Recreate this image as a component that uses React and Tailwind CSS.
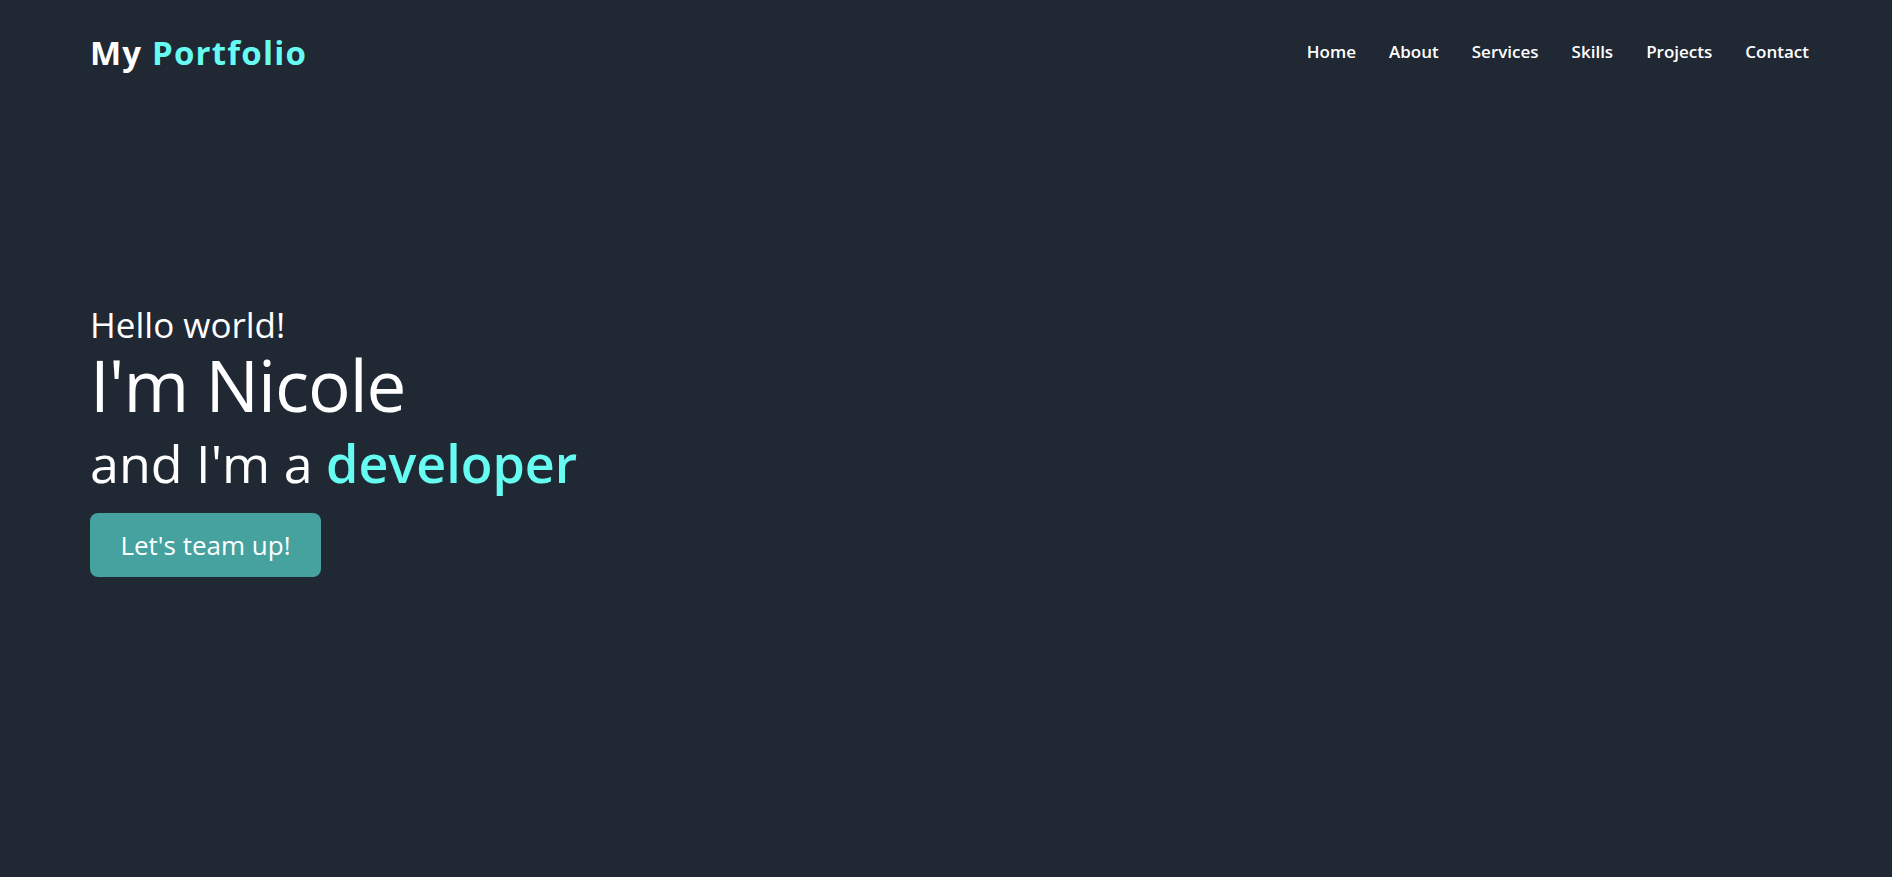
export default function App() {
  const links = ["Home", "About", "Services", "Skills", "Projects", "Contact"];
  return (
    <div className="h-screen w-full bg-[#1f2833] text-white flex flex-col overflow-hidden font-['Open_Sans','Noto_Sans',sans-serif]">
      <header className="h-[104px] shrink-0 flex items-center justify-between pl-[90px] pr-[83px]">
        <div className="text-[33px] font-bold tracking-[1.2px] leading-none">
          My <span className="text-[#66fcf1]">Portfolio</span>
        </div>
        <nav className="flex items-center gap-[33px] text-[17px] font-semibold">
          {links.map((l) => (
            <a key={l} href="#" className="text-white">{l}</a>
          ))}
        </nav>
      </header>
      <main className="flex-1 flex flex-col justify-center pl-[90px] pt-[7px] pb-[104px]">
        <div className="text-[35px] leading-none font-normal">Hello world!</div>
        <div className="mt-[7px] text-[71px] leading-none tracking-[-1px] font-normal">I'm Nicole</div>
        <div className="mt-[17px] text-[52px] leading-none font-normal">
          and I'm a <span className="text-[#66fcf1] font-semibold">developer</span>
        </div>
        <div className="mt-[24px]">
          <button className="w-[231px] h-[64px] rounded-[8px] bg-[#45a29e] text-white text-[26px]">
            Let's team up!
          </button>
        </div>
      </main>
    </div>
  );
}
